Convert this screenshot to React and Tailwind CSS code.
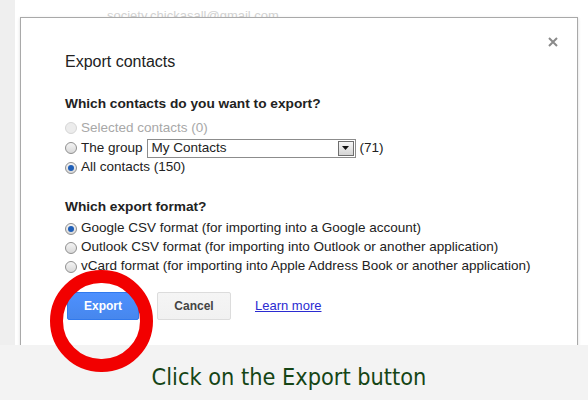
import React from "react";

function Radio({ checked, disabled }) {
  if (disabled) {
    return (
      <span className="inline-block w-[12px] h-[12px] rounded-full border border-[#d6d6d6] bg-[#ececec] mr-[4px] shrink-0" />
    );
  }
  return (
    <span className="inline-flex items-center justify-center w-[12px] h-[12px] rounded-full border border-[#8f8f8f] bg-[linear-gradient(#f4f4f4,#d8d8d8)] mr-[4px] shrink-0">
      {checked && <span className="block w-[6px] h-[6px] rounded-full bg-[#1f5fb8]" />}
    </span>
  );
}

function Row({ children, checked, disabled, h = "h-[20px]" }) {
  return (
    <div className={`flex items-center ${h} ${disabled ? "text-[#a8a8a8]" : "text-[#222]"}`}>
      <Radio checked={checked} disabled={disabled} />
      {children}
    </div>
  );
}

export default function App() {
  return (
    <div className="relative w-[588px] h-[400px] bg-white overflow-hidden font-['Liberation_Sans',Arial,sans-serif]">
      <div className="absolute left-0 top-0 w-[15px] h-[345px] bg-[#efefef]" />
      <div className="absolute left-[107px] top-[8px] text-[13px] leading-[16px] text-[#d2d2d2]">
        society.chickasall@gmail.com
      </div>

      <div className="absolute left-[20px] top-[17px] w-[558px] h-[340px] bg-white border border-[#a9a9a9] shadow-[0_1px_3px_rgba(0,0,0,0.15)]">
        <svg className="absolute left-[527px] top-[19px]" width="10" height="10" viewBox="0 0 10 10">
          <path d="M1 1 L9 9 M9 1 L1 9" stroke="#8a8a8a" strokeWidth="2" />
        </svg>
        <div className="pl-[44px] pt-[34px] text-[13.5px]">
          <div className="text-[16px] leading-[20px] text-[#222]">Export contacts</div>
          <div className="mt-[23px] text-[13.7px] leading-[18px] font-bold text-[#222]">
            Which contacts do you want to export?
          </div>
          <div className="mt-[5px]">
            <Row disabled>Selected contacts (0)</Row>
            <Row>
              The group
              <div className="ml-[4px] flex items-center w-[209px] h-[19px] border border-[#8c8c8c] bg-white">
                <span className="pl-[4px] flex-1 text-[#222]">My Contacts</span>
                <span className="flex items-center justify-center w-[16px] h-[15px] mr-[1px] border border-[#6e6e6e] bg-[linear-gradient(#f6f6f6,#d4d4d4)]">
                  <svg width="7" height="4" viewBox="0 0 7 4">
                    <path d="M0 0 L7 0 L3.5 4 Z" fill="#111" />
                  </svg>
                </span>
              </div>
              <span className="ml-[4px]">(71)</span>
            </Row>
            <Row checked h="h-[19px]">All contacts (150)</Row>
          </div>
          <div className="mt-[21px] text-[13.7px] leading-[18px] font-bold text-[#222]">Which export format?</div>
          <div className="mt-[3px]">
            <Row checked h="h-[19px]">Google CSV format (for importing into a Google account)</Row>
            <Row h="h-[19px]">Outlook CSV format (for importing into Outlook or another application)</Row>
            <Row h="h-[19px]">vCard format (for importing into Apple Address Book or another application)</Row>
          </div>
          <div className="mt-[16px] flex items-center">
            <button className="ml-[2px] w-[72px] h-[28px] rounded-[2px] border border-[#3079ed] bg-[linear-gradient(#4d90fe,#4787ed)] text-white text-[12px] font-bold">
              Export
            </button>
            <button className="ml-[18px] w-[74px] h-[28px] rounded-[2px] border border-[#dcdcdc] bg-[linear-gradient(#f5f5f5,#f1f1f1)] text-[#444] text-[12px] font-bold">
              Cancel
            </button>
            <a className="ml-[24px] text-[13px] text-[#2b2bd1] underline">Learn more</a>
          </div>
        </div>
      </div>

      <div className="absolute left-0 bottom-0 w-full h-[55px] bg-[#f3f3f3] flex items-center justify-center pt-[8px]">
        <span className="mr-[10px] text-[23.3px] leading-[28px] text-[#154515] font-['DejaVu_Sans_Condensed','DejaVu_Sans',sans-serif] [font-stretch:condensed]">
          Click on the Export button
        </span>
      </div>

      <div className="absolute left-[50px] top-[270px] w-[103px] h-[102px] rounded-full border-[13px] border-[#f20000]" />
    </div>
  );
}
